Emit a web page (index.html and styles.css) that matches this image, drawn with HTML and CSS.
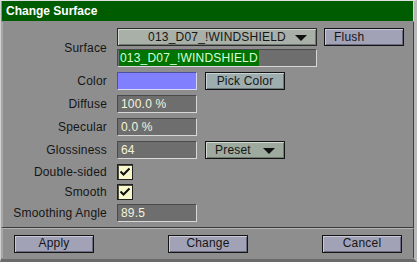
FILE: index.html
```html
<!DOCTYPE html>
<html>
<head>
<meta http-equiv="Content-Type" content="text/html; charset=UTF-8" />
<link rel="stylesheet" href="styles.css">
</head>

<body>

<div id="window">
	<div id="title-bar">Change Surface</div>

	<div id="form">
		<div class="row surface-row">
			<div class="label">Surface</div>
			<div class="surface-fields">
				<div class="field-line">
					<div class="dropdown wide">013_D07_!WINDSHIELD<span class="arrow"></span></div>
					<button class="button flush">Flush</button>
				</div>
				<div class="input wide"><span class="selected">013_D07_!WINDSHIELD</span></div>
			</div>
		</div>

		<div class="row">
			<div class="label">Color</div>
			<div class="swatch"></div>
			<button class="button green">Pick Color</button>
		</div>

		<div class="row">
			<div class="label">Diffuse</div>
			<div class="input">100.0 %</div>
		</div>

		<div class="row">
			<div class="label">Specular</div>
			<div class="input">0.0 %</div>
		</div>

		<div class="row">
			<div class="label">Glossiness</div>
			<div class="input">64</div>
			<div class="dropdown small">Preset<span class="arrow"></span></div>
		</div>

		<div class="row check-row">
			<div class="label">Double-sided</div>
			<div class="checkbox">
				<svg width="14" height="14" viewBox="0 0 14 14"><polyline points="2.5,6.5 5.5,9.5 11.5,3.5" fill="none" stroke="#101010" stroke-width="2" /></svg>
			</div>
		</div>

		<div class="row check-row">
			<div class="label">Smooth</div>
			<div class="checkbox">
				<svg width="14" height="14" viewBox="0 0 14 14"><polyline points="2.5,6.5 5.5,9.5 11.5,3.5" fill="none" stroke="#101010" stroke-width="2" /></svg>
			</div>
		</div>

		<div class="row angle-row">
			<div class="label">Smoothing Angle</div>
			<div class="input">89.5</div>
		</div>
	</div>

	<div id="button-bar">
		<button class="button">Apply</button>
		<button class="button">Change</button>
		<button class="button">Cancel</button>
	</div>
</div>

</body>
</html>
```

FILE: styles.css
```css
body {
	margin: 0;
	background-color: #8e8e8e;
	font-family: "Liberation Sans", Arial, sans-serif;
	font-size: 12px;
	letter-spacing: 0.2px;
	color: #161616;
}

#window {
	width: 417px;
	height: 262px;
	box-sizing: border-box;
	border-top: 1px solid #e0e0e0;
	border-left: 1px solid #d0d0d0;
	border-right: 3px solid #b8b8b8;
	border-bottom: 3px solid #6a6a6a;
	background-color: #8e8e8e;
}

#title-bar {
	height: 20px;
	margin: 0 0 1px 1px;
	padding: 0 4px;
	background-color: #005c00;
	border-right: 1px solid #c8e0c8;
	color: white;
	font-weight: bold;
	font-size: 12px;
	letter-spacing: 0;
	line-height: 20px;
}

#form {
	display: flex;
	flex-direction: column;
	gap: 5px;
	padding: 6px 0 5px 0;
	border-left: 2px solid #a8a8a8;
	border-right: 1px solid #404040;
	border-bottom: 1px solid #3a3a3a;
	height: 206px;
	box-sizing: border-box;
}

.row {
	display: flex;
	align-items: center;
	gap: 8px;
	height: 18px;
}

.label {
	width: 104px;
	margin-right: 2px;
	text-align: right;
	flex-shrink: 0;
}

.surface-row {
	height: 39px;
}

.surface-fields {
	display: flex;
	flex-direction: column;
	gap: 3px;
}

.field-line {
	display: flex;
	gap: 7px;
}

.check-row {
	height: 16px;
}

.check-row + .check-row,
.angle-row {
	margin-top: -1px;
}

.input {
	width: 80px;
	height: 18px;
	box-sizing: border-box;
	padding: 0 3px;
	background-color: #6e6e6e;
	border-top: 1px solid #4a4a4a;
	border-left: 1px solid #4a4a4a;
	border-right: 1px solid #d8d8d8;
	border-bottom: 1px solid #d8d8d8;
	color: #f4f4dc;
	line-height: 16px;
	white-space: nowrap;
}

.input.wide {
	width: 200px;
	padding: 0 1px;
}

.selected {
	display: inline-block;
	background-color: #007400;
	color: #d8ffd8;
	padding: 0 1px;
	height: 16px;
}

.swatch {
	width: 80px;
	height: 18px;
	box-sizing: border-box;
	background-color: #8080ff;
	border-top: 1px solid #5050a0;
	border-left: 1px solid #5050a0;
	border-right: 1px solid #d8d8f0;
	border-bottom: 1px solid #d8d8f0;
}

.button {
	width: 80px;
	height: 18px;
	box-sizing: border-box;
	padding: 0;
	background-color: #a2a2b6;
	border: 1px solid #141414;
	box-shadow: inset 1px 1px 0 #c8c8d8, inset -1px -1px 0 #6a6a80;
	font-family: inherit;
	font-size: inherit;
	letter-spacing: inherit;
	color: #161616;
	text-align: center;
	line-height: 15px;
}

.button.flush {
	text-align: left;
	padding-left: 9px;
}

.button.green {
	background-color: #9eaeae;
	box-shadow: inset 1px 1px 0 #c8d4d4, inset -1px -1px 0 #6a7a7a;
}

.dropdown {
	position: relative;
	height: 18px;
	box-sizing: border-box;
	background-color: #a8b4a8;
	border: 1px solid #141414;
	box-shadow: inset 1px 1px 0 #d0d8d0, inset -1px -1px 0 #707a70;
	text-align: center;
	line-height: 16px;
	white-space: nowrap;
}

.dropdown.wide {
	width: 200px;
	background-color: #a8b0a8;
	border-color: #2a2a2a;
}

.dropdown.small {
	width: 80px;
	background-color: #9eaa9e;
	text-align: left;
	padding-left: 9px;
}

.arrow {
	position: absolute;
	right: 9px;
	top: 6px;
	width: 0;
	height: 0;
	border-left: 6px solid transparent;
	border-right: 6px solid transparent;
	border-top: 6px solid #101010;
}

.checkbox {
	width: 16px;
	height: 16px;
	box-sizing: border-box;
	background-color: #f8f8cc;
	border: 1px solid #202020;
	box-shadow: inset 1px 1px 0 #505040;
}

.checkbox svg {
	display: block;
}

#button-bar {
	display: flex;
	justify-content: space-between;
	align-items: center;
	padding: 0 11px 0 11px;
	height: 29px;
	border-top: 1px solid #b4b4b4;
	border-left: 2px solid #a8a8a8;
	border-right: 1px solid #404040;
}
```
